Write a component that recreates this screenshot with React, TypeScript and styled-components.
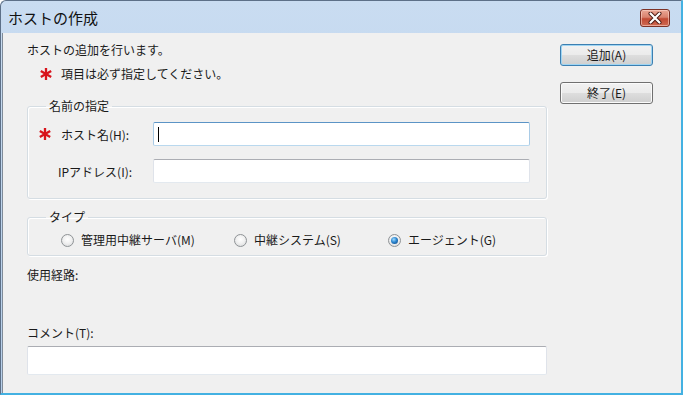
import * as React from 'react';
import styled, { createGlobalStyle } from 'styled-components';

const GlobalStyle = createGlobalStyle`
  html, body {
    margin: 0;
    padding: 0;
    background: #ffffff;
  }

  body {
    font-family: "Noto Sans CJK JP", "Noto Sans", sans-serif;
    font-size: 12px;
    color: #1a1a1a;
  }
`;

const Window = styled.div`
  display: flex;
  flex-direction: column;
  box-sizing: border-box;
  width: 683px;
  height: 395px;
  border-top: 1px solid #5d7088;
  border-left: 1px solid #5d7088;
  border-right: 2px solid #43b1e2;
  border-bottom: 2px solid #43b1e2;
  border-top-left-radius: 6px;
  background: linear-gradient(180deg, #c9dcf1 0%, #bcd3ec 60%, #b6cee9 100%);
  overflow: hidden;
`;

const TitleBar = styled.div`
  display: flex;
  align-items: center;
  justify-content: space-between;
  height: 32px;
  padding: 0 11px 0 7px;
  flex-shrink: 0;
`;

const Title = styled.span`
  font-size: 15px;
  line-height: 18px;
  color: #111;
  margin-top: 2px;
`;

const CloseButton = styled.div`
  display: flex;
  align-items: center;
  justify-content: center;
  box-sizing: border-box;
  width: 30px;
  height: 18px;
  margin-top: 1px;
  border: 1px solid #7d3226;
  border-radius: 3px;
  background: linear-gradient(180deg, #eaa795 0%, #d9826e 45%, #c14a33 55%, #cf6a52 100%);
  box-shadow: inset 0 0 0 1px rgba(255, 220, 210, 0.55);
`;

const Body = styled.div`
  flex: 1;
  display: flex;
  gap: 13px;
  margin-left: 1px;
  padding: 9px 0 0 24px;
  background: #f0f0f0;
  border-left: 1px solid #7f8b99;
`;

const Main = styled.div`
  display: flex;
  flex-direction: column;
  width: 520px;
`;

const Side = styled.div`
  display: flex;
  flex-direction: column;
  gap: 16px;
  padding-top: 2px;
`;

const Text = styled.div<{ $mt?: number }>`
  line-height: 16px;
  margin-top: ${p => p.$mt ?? 0}px;
  white-space: nowrap;
`;

const NoteRow = styled.div`
  display: flex;
  align-items: center;
  gap: 9px;
  margin-top: 8px;
  padding-left: 13px;
  line-height: 16px;
`;

const Group = styled.fieldset<{ $mt: number; $pt: number; $pb: number }>`
  margin: ${p => p.$mt}px 0 0 0;
  padding: ${p => p.$pt}px 16px ${p => p.$pb}px 11px;
  border: 1px solid #d5dde3;
  border-radius: 3px;
  box-shadow: inset 1px 1px 0 #ffffff, 1px 1px 0 #ffffff;
  min-width: 0;
`;

const Legend = styled.legend`
  padding: 0 3px;
  margin-left: 7px;
  line-height: 16px;
`;

const FieldRow = styled.div<{ $mt?: number }>`
  display: flex;
  align-items: center;
  margin-top: ${p => p.$mt ?? 0}px;
`;

const Label = styled.div<{ $indent: number }>`
  display: flex;
  align-items: center;
  gap: 10px;
  box-sizing: border-box;
  width: 114px;
  padding-left: ${p => p.$indent}px;
  white-space: nowrap;
`;

const Input = styled.div<{ $focused?: boolean; $width: number; $height: number; $mt?: number }>`
  position: relative;
  box-sizing: border-box;
  width: ${p => p.$width}px;
  height: ${p => p.$height}px;
  margin-top: ${p => p.$mt ?? 0}px;
  background: #ffffff;
  border: 1px solid;
  border-radius: 2px;
  border-color: ${p =>
    p.$focused
      ? '#5b94c6 #a9cbe6 #b9d8ee #a9cbe6'
      : '#abadb3 #dfe3ea #e3e9ef #dfe3ea'};
`;

const Caret = styled.span`
  position: absolute;
  left: 4px;
  top: 4px;
  width: 1px;
  height: 15px;
  background: #000;
`;

const RadioRow = styled.div`
  display: flex;
  align-items: center;
  padding-left: 22px;
  line-height: 16px;
`;

const RadioItem = styled.label<{ $width?: number }>`
  display: flex;
  align-items: center;
  gap: 7px;
  width: ${p => (p.$width ? `${p.$width}px` : 'auto')};
  white-space: nowrap;
`;

const RadioDot = styled.span<{ $checked?: boolean }>`
  display: flex;
  align-items: center;
  justify-content: center;
  box-sizing: border-box;
  width: 13px;
  height: 13px;
  border-radius: 50%;
  border: 1px solid #8f9396;
  background: radial-gradient(circle at 50% 40%, #ffffff 0%, #f1f1f1 45%, #d4d6d8 100%);

  &::after {
    content: '';
    display: ${p => (p.$checked ? 'block' : 'none')};
    width: 7px;
    height: 7px;
    border-radius: 50%;
    background: radial-gradient(circle at 40% 35%, #9fdcff 0%, #2b85cf 45%, #0d3f79 100%);
  }
`;

const Button = styled.div<{ $default?: boolean }>`
  display: flex;
  align-items: center;
  justify-content: center;
  box-sizing: border-box;
  width: 93px;
  height: 22px;
  border: 1px solid ${p => (p.$default ? '#3c7fb1' : '#707070')};
  border-radius: 3px;
  background: linear-gradient(180deg, #f2f2f2 0%, #ebebeb 48%, #dddddd 52%, #cfcfcf 100%);
  box-shadow: inset 0 0 0 1px ${p => (p.$default ? '#9fd5f3' : '#fbfbfb')};
  line-height: 16px;
`;

const Asterisk = () => (
  <svg width="12" height="12" viewBox="0 0 12 12">
    <g stroke="#d8141c" strokeWidth="2.3" strokeLinecap="butt">
      <line x1="6" y1="0" x2="6" y2="12" />
      <line x1="0.8" y1="3" x2="11.2" y2="9" />
      <line x1="0.8" y1="9" x2="11.2" y2="3" />
    </g>
  </svg>
);

const CloseIcon = () => (
  <svg width="14" height="12" viewBox="0 0 14 12">
    <path d="M2.5 1.5 L11.5 10.5 M11.5 1.5 L2.5 10.5" stroke="#4a1a12" strokeWidth="4" strokeLinecap="round" />
    <path d="M2.5 1.5 L11.5 10.5 M11.5 1.5 L2.5 10.5" stroke="#ffffff" strokeWidth="2.2" strokeLinecap="round" />
  </svg>
);

export default function App() {
  return (
    <>
      <GlobalStyle />
      <Window>
        <TitleBar>
          <Title>ホストの作成</Title>
          <CloseButton>
            <CloseIcon />
          </CloseButton>
        </TitleBar>

        <Body>
          <Main>
            <Text>ホストの追加を行います。</Text>
            <NoteRow>
              <Asterisk />
              <span>項目は必ず指定してください。</span>
            </NoteRow>

            <Group $mt={16} $pt={8} $pb={15}>
              <Legend>名前の指定</Legend>
              <FieldRow>
                <Label $indent={0}>
                  <Asterisk />
                  <span>ホスト名(H):</span>
                </Label>
                <Input $focused $width={377} $height={24}>
                  <Caret />
                </Input>
              </FieldRow>
              <FieldRow $mt={13}>
                <Label $indent={19}>IPアドレス(I):</Label>
                <Input $width={377} $height={24} />
              </FieldRow>
            </Group>

            <Group $mt={10} $pt={7} $pb={7}>
              <Legend>タイプ</Legend>
              <RadioRow>
                <RadioItem $width={173}>
                  <RadioDot />
                  管理用中継サーバ(M)
                </RadioItem>
                <RadioItem $width={154}>
                  <RadioDot />
                  中継システム(S)
                </RadioItem>
                <RadioItem>
                  <RadioDot $checked />
                  エージェント(G)
                </RadioItem>
              </RadioRow>
            </Group>

            <Text $mt={11}>使用経路:</Text>
            <Text $mt={42}>コメント(T):</Text>
            <Input $width={520} $height={29} $mt={5} />
          </Main>

          <Side>
            <Button $default>追加(A)</Button>
            <Button>終了(E)</Button>
          </Side>
        </Body>
      </Window>
    </>
  );
}
